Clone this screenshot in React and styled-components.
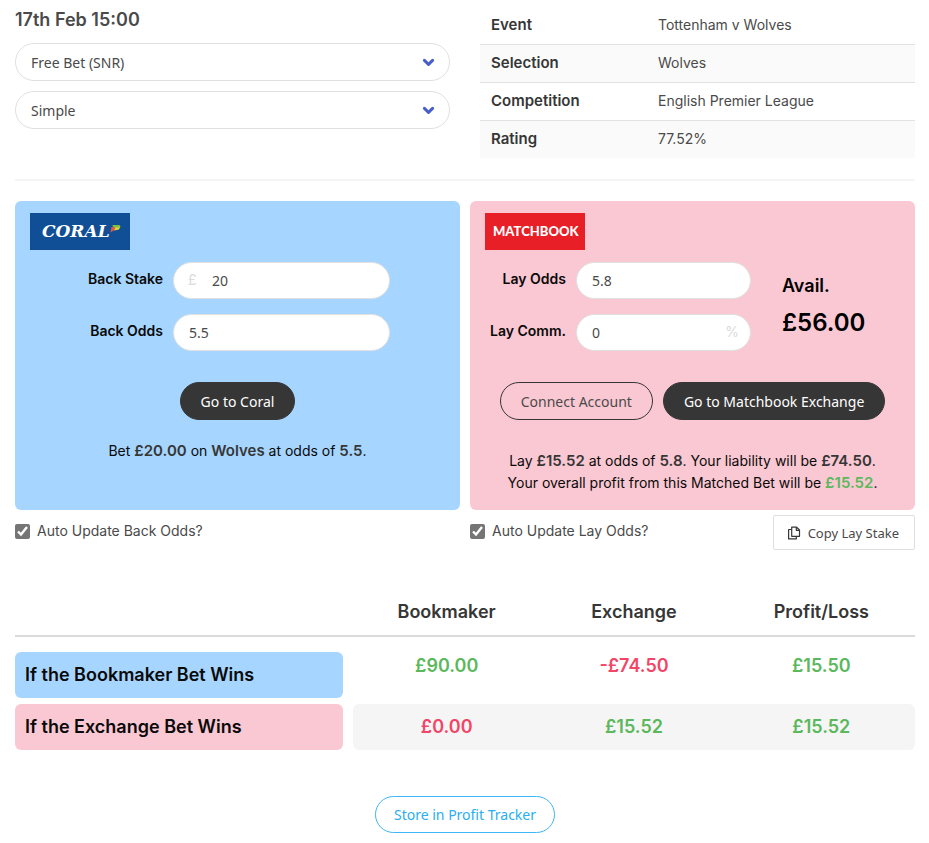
import React, { useState } from 'react';
import styled, { createGlobalStyle } from 'styled-components';

const rows = [
  { label: 'Event', value: 'Tottenham v Wolves' },
  { label: 'Selection', value: 'Wolves' },
  { label: 'Competition', value: 'English Premier League' },
  { label: 'Rating', value: '77.52%' },
];

export default function App() {
  const [betType, setBetType] = useState('Free Bet (SNR)');
  const [mode, setMode] = useState('Simple');
  const [backStake, setBackStake] = useState('20');
  const [backOdds, setBackOdds] = useState('5.5');
  const [layOdds, setLayOdds] = useState('5.8');
  const [layComm, setLayComm] = useState('0');
  const [autoBack, setAutoBack] = useState(true);
  const [autoLay, setAutoLay] = useState(true);

  return (
    <Page>
      <GlobalStyle />
      <TopWrap>
        <div>
          <DateTitle>17th Feb 15:00</DateTitle>
          <SelectList>
            <Dropdown
              label="Bet type"
              value={betType}
              onChange={setBetType}
              options={['Free Bet (SNR)', 'Normal', 'Free Bet (SR)']}
            />
            <Dropdown
              label="Calculator mode"
              value={mode}
              onChange={setMode}
              options={['Simple', 'Advanced']}
            />
          </SelectList>
        </div>
        <EventTable>
          <tbody>
            {rows.map((row) => (
              <tr key={row.label}>
                <th scope="row">{row.label}</th>
                <td>{row.value}</td>
              </tr>
            ))}
          </tbody>
        </EventTable>
      </TopWrap>

      <Divider />

      <PanelWrap>
        <Panel $color="#a6d6ff">
          <CoralLogo />
          <BackForm>
            <FieldLabel htmlFor="backStake">Back Stake</FieldLabel>
            <InputWrap>
              <Prefix>£</Prefix>
              <Input
                id="backStake"
                $prefixed
                value={backStake}
                onChange={(e) => setBackStake(e.target.value)}
              />
            </InputWrap>
            <FieldLabel htmlFor="backOdds">Back Odds</FieldLabel>
            <InputWrap>
              <Input
                id="backOdds"
                value={backOdds}
                onChange={(e) => setBackOdds(e.target.value)}
              />
            </InputWrap>
          </BackForm>
          <ButtonRow>
            <PillButton $dark>Go to Coral</PillButton>
          </ButtonRow>
          <Summary $top={20}>
            Bet <strong>£20.00</strong> on <strong>Wolves</strong> at odds of{' '}
            <strong>5.5</strong>.
          </Summary>
        </Panel>

        <Panel $color="#fac8d3">
          <MatchbookLogo />
          <LayWrap>
            <LayForm>
              <FieldLabel htmlFor="layOdds">Lay Odds</FieldLabel>
              <InputWrap>
                <Input
                  id="layOdds"
                  value={layOdds}
                  onChange={(e) => setLayOdds(e.target.value)}
                />
              </InputWrap>
              <FieldLabel htmlFor="layComm">Lay Comm.</FieldLabel>
              <InputWrap>
                <Input
                  id="layComm"
                  value={layComm}
                  onChange={(e) => setLayComm(e.target.value)}
                />
                <Suffix>%</Suffix>
              </InputWrap>
            </LayForm>
            <Avail>
              <AvailTitle>Avail.</AvailTitle>
              <AvailAmount>£56.00</AvailAmount>
            </Avail>
          </LayWrap>
          <ButtonRow>
            <PillButton>Connect Account</PillButton>
            <PillButton $dark>Go to Matchbook Exchange</PillButton>
          </ButtonRow>
          <Summary $top={30}>
            Lay <strong>£15.52</strong> at odds of <strong>5.8</strong>. Your
            liability will be <strong>£74.50</strong>.
            <br />
            Your overall profit from this Matched Bet will be{' '}
            <Profit>£15.52</Profit>.
          </Summary>
        </Panel>

        <OptionRow>
          <CheckLabel>
            <input
              type="checkbox"
              checked={autoBack}
              onChange={(e) => setAutoBack(e.target.checked)}
            />
            Auto Update Back Odds?
          </CheckLabel>
        </OptionRow>
        <OptionRow>
          <CheckLabel>
            <input
              type="checkbox"
              checked={autoLay}
              onChange={(e) => setAutoLay(e.target.checked)}
            />
            Auto Update Lay Odds?
          </CheckLabel>
          <CopyButton>
            <CopyIcon />
            Copy Lay Stake
          </CopyButton>
        </OptionRow>
      </PanelWrap>

      <ResultTable>
        <thead>
          <tr>
            <LabelHead aria-label="Outcome" />
            <th scope="col">Bookmaker</th>
            <th scope="col">Exchange</th>
            <th scope="col">Profit/Loss</th>
          </tr>
        </thead>
        <tbody>
          <WinRow>
            <th scope="row">
              <RowLabel $color="#a6d6ff">If the Bookmaker Bet Wins</RowLabel>
            </th>
            <Amount>£90.00</Amount>
            <Amount $loss>-£74.50</Amount>
            <Amount>£15.50</Amount>
          </WinRow>
          <LoseRow>
            <th scope="row">
              <RowLabel $color="#fac8d3">If the Exchange Bet Wins</RowLabel>
            </th>
            <Amount $loss>£0.00</Amount>
            <Amount>£15.52</Amount>
            <Amount>£15.52</Amount>
          </LoseRow>
        </tbody>
      </ResultTable>

      <StoreWrap>
        <StoreButton>Store in Profit Tracker</StoreButton>
      </StoreWrap>
    </Page>
  );
}

function Dropdown({ label, value, onChange, options }) {
  return (
    <SelectWrap>
      <Select
        aria-label={label}
        value={value}
        onChange={(e) => onChange(e.target.value)}
      >
        {options.map((option) => (
          <option key={option}>{option}</option>
        ))}
      </Select>
      <Chevron viewBox="0 0 13 9" aria-hidden="true">
        <path d="M2.4 2.4 L6.5 6.4 L10.6 2.4" />
      </Chevron>
    </SelectWrap>
  );
}

function CoralLogo() {
  return (
    <Logo viewBox="0 0 100 37" role="img" aria-label="Coral">
      <rect width="100" height="37" fill="#104e96" />
      <text
        x="12"
        y="24"
        fill="#fff"
        fontFamily="'DejaVu Serif', serif"
        fontSize="17"
        fontWeight="700"
        fontStyle="italic"
      >
        CORAL
      </text>
      <path d="M84 14 L90.5 13 L89 16.5 L84 17.5 Z" fill="#d9dc2f" />
      <path d="M82.5 12 L90 12 L89 14.5 L83 14.5 Z" fill="#7cbf3f" />
      <path d="M81.5 14 L85.5 14.5 L84.5 17 L80.5 19.5 Z" fill="#e0584a" />
    </Logo>
  );
}

function MatchbookLogo() {
  return (
    <Logo viewBox="0 0 100 37" role="img" aria-label="Matchbook">
      <rect width="100" height="37" fill="#e81f27" />
      <text
        x="8"
        y="23"
        fill="#fff"
        fontFamily="Lato, sans-serif"
        fontSize="13"
        fontWeight="900"
      >
        MATCHBOOK
      </text>
    </Logo>
  );
}

function CopyIcon() {
  return (
    <CopySvg viewBox="0 0 14 14" aria-hidden="true">
      <path d="M4.7 1.2 H9.6 L12.5 4 V10.3 H4.7 Z" />
      <path d="M9.3 1.4 V4.3 H12.3" />
      <path d="M4.5 3.5 H1.6 V12.9 H9.3 V10.5" />
    </CopySvg>
  );
}

const GlobalStyle = createGlobalStyle`
  * {
    box-sizing: border-box;
  }
  body {
    margin: 0;
    background: #fff;
    color: #4a4a4a;
    font-family: Inter, sans-serif;
    font-size: 14px;
    line-height: 22px;
  }
  button,
  input,
  select {
    font-family: 'Noto Sans', sans-serif;
    font-size: 14px;
  }
`;

const Page = styled.div`
  padding: 6px 14px 10px 15px;
`;
const TopWrap = styled.div`
  display: grid;
  grid-template-columns: 1fr 1fr;
  gap: 30px;
`;
const DateTitle = styled.h1`
  margin: 0;
  padding: 2px 0 11px;
  font-size: 18px;
  font-weight: 600;
  line-height: 24px;
`;
const SelectList = styled.div`
  display: flex;
  flex-direction: column;
  gap: 10px;
`;
const SelectWrap = styled.div`
  position: relative;
`;
const Select = styled.select`
  display: block;
  width: 100%;
  height: 38px;
  padding: 0 40px 0 15px;
  border: 1px solid #e0e0e0;
  border-radius: 19px;
  background: #fff;
  color: #4a4a4a;
  appearance: none;
`;
const Chevron = styled.svg`
  position: absolute;
  top: 15px;
  right: 15px;
  width: 13px;
  height: 9px;
  fill: none;
  stroke: #485fc7;
  stroke-width: 3;
  stroke-linecap: round;
  stroke-linejoin: round;
  pointer-events: none;
`;
const EventTable = styled.table`
  width: 100%;
  border-collapse: collapse;

  th,
  td {
    height: 38px;
    padding: 0 11px;
    text-align: left;
  }
  th {
    width: 167px;
    color: #363636;
    font-size: 15px;
    font-weight: 600;
  }
  tr + tr {
    border-top: 1px solid #e2e2e2;
  }
  tr:nth-child(even) {
    background: #fafafa;
  }
`;
const Divider = styled.hr`
  height: 2px;
  margin: 21px 0 20px;
  border: none;
  background: #f5f5f5;
`;
const PanelWrap = styled.div`
  display: grid;
  grid-template-columns: 1fr 1fr;
  column-gap: 10px;
`;
const Panel = styled.section`
  padding: 12px 15px 16px;
  border-radius: 6px;
  background: ${({ $color }) => $color};
  color: #0a0a0a;
`;
const Logo = styled.svg`
  display: block;
  width: 100px;
  height: 37px;
`;
const BackForm = styled.div`
  display: grid;
  grid-template-columns: 133px 217px;
  column-gap: 10px;
  row-gap: 15px;
  margin-top: 12px;
`;
const LayWrap = styled.div`
  display: flex;
  gap: 31px;
  margin-top: 12px;
`;
const LayForm = styled.div`
  display: grid;
  grid-template-columns: 81px 175px;
  column-gap: 10px;
  row-gap: 15px;
`;
const FieldLabel = styled.label`
  padding-top: 6px;
  font-weight: 600;
  text-align: right;
  white-space: nowrap;
`;
const InputWrap = styled.div`
  position: relative;
`;
const Input = styled.input`
  display: block;
  width: 100%;
  height: 37px;
  padding: 0 15px 0 ${({ $prefixed }) => ($prefixed ? '38px' : '15px')};
  border: 1px solid #e0e0e0;
  border-radius: 19px;
  background: #fff;
  color: #4a4a4a;
`;
const Prefix = styled.span`
  position: absolute;
  top: 7px;
  left: 15px;
  color: #dbdbdb;
`;
const Suffix = styled.span`
  position: absolute;
  top: 7px;
  right: 12px;
  color: #dbdbdb;
`;
const Avail = styled.div`
  padding-top: 11px;
  color: #000;
`;
const AvailTitle = styled.div`
  font-size: 18px;
  font-weight: 600;
  line-height: 26px;
`;
const AvailAmount = styled.div`
  margin-top: 7px;
  font-size: 24px;
  font-weight: 600;
  line-height: 34px;
`;
const ButtonRow = styled.div`
  display: flex;
  justify-content: center;
  gap: 10px;
  margin-top: 31px;
`;
const PillButton = styled.button`
  height: 38px;
  padding: 0 20px;
  border: 1px solid #363636;
  border-radius: 19px;
  background: ${({ $dark }) => ($dark ? '#363636' : 'transparent')};
  color: ${({ $dark }) => ($dark ? '#fff' : '#4a4a4a')};
  white-space: nowrap;
  cursor: pointer;
`;
const Summary = styled.p`
  margin: ${({ $top }) => $top}px 0 0;
  text-align: center;

  strong {
    color: #363636;
    font-size: 15px;
    font-weight: 600;
  }
`;
const Profit = styled.b`
  color: #5cb85c;
  font-size: 15px;
  font-weight: 600;
`;
const OptionRow = styled.div`
  display: flex;
  align-items: flex-start;
  justify-content: space-between;
  padding-top: 5px;
`;
const CheckLabel = styled.label`
  display: flex;
  align-items: center;
  gap: 7px;
  padding-top: 5px;

  input {
    width: 15px;
    height: 15px;
    margin: 0;
    accent-color: #757575;
  }
`;
const CopyButton = styled.button`
  display: flex;
  align-items: center;
  gap: 7px;
  height: 35px;
  padding: 0 15px 0 13px;
  border: 1px solid #e0e0e0;
  border-radius: 2px;
  background: #fff;
  color: #4a4a4a;
  font-size: 13px;
  cursor: pointer;
`;
const CopySvg = styled.svg`
  width: 14px;
  height: 14px;
  fill: none;
  stroke: #363636;
  stroke-width: 1.2;
  stroke-linejoin: round;
`;
const ResultTable = styled.table`
  width: 100%;
  margin-top: 37px;
  border-spacing: 0;
  table-layout: fixed;
  font-size: 18px;
  line-height: 26px;

  th,
  td {
    padding: 0;
    font-weight: 600;
  }
  thead th {
    padding: 12px 0 10px;
    border-bottom: 2px solid #dbdbdb;
    color: #363636;
  }
`;
const LabelHead = styled.th`
  width: 338px;
`;
const RowLabel = styled.div`
  margin-right: 10px;
  padding: 10px;
  border-radius: 6px;
  background: ${({ $color }) => $color};
  color: #0a0a0a;
  text-align: left;
`;
const Amount = styled.td`
  color: ${({ $loss }) => ($loss ? '#f14668' : '#5cb85c')};
  text-align: center;
`;
const WinRow = styled.tr`
  vertical-align: top;

  th {
    padding: 15px 0 6px;
  }
  td {
    padding: 16px 0 6px;
  }
`;
const LoseRow = styled.tr`
  td {
    background: #f5f5f5;
  }
  td:nth-child(2) {
    border-radius: 6px 0 0 6px;
  }
  td:last-child {
    border-radius: 0 6px 6px 0;
  }
`;
const StoreWrap = styled.div`
  display: flex;
  justify-content: center;
  margin-top: 46px;
`;
const StoreButton = styled.button`
  height: 37px;
  padding: 0 18px;
  border: 1px solid #3eb5f5;
  border-radius: 19px;
  background: #fff;
  color: #29aef3;
  cursor: pointer;
`;
